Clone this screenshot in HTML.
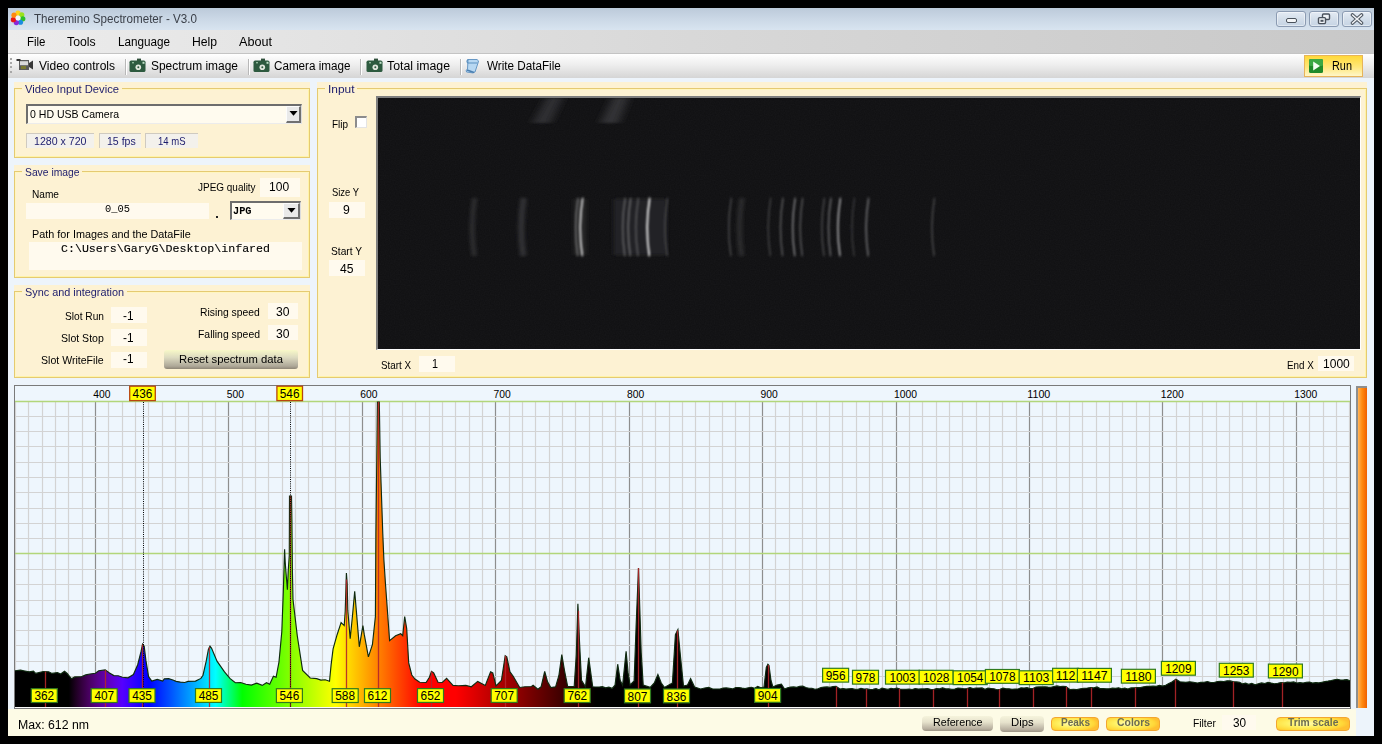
<!DOCTYPE html>
<html><head><meta charset="utf-8"><style>
html,body{margin:0;padding:0;}
body{width:1382px;height:744px;background:#000;position:relative;overflow:hidden;font-family:"Liberation Sans",sans-serif;}
.r{position:absolute;box-sizing:border-box;}
svg.r{box-sizing:content-box;}
.t{position:absolute;white-space:nowrap;transform-origin:0 0;}
svg text{font-family:"Liberation Sans",sans-serif;}
</style></head><body>
<div class="r" style="left:8px;top:8px;width:1366px;height:728px;background:#edf4fb;"></div>
<div class="r" style="left:8px;top:8px;width:1366px;height:22px;background:linear-gradient(#bccada,#cbd8e6 50%,#d8e4f0);"></div>
<svg class="r" style="left:9px;top:9px;" width="18" height="18" viewBox="0 0 18 18"><circle cx="9.00" cy="4.10" r="2.6" fill="#ffd21a"/><circle cx="12.75" cy="5.85" r="2.6" fill="#9ae21a"/><circle cx="13.83" cy="9.85" r="2.6" fill="#2dbf2a"/><circle cx="11.45" cy="13.24" r="2.6" fill="#1a8de0"/><circle cx="7.32" cy="13.60" r="2.6" fill="#8a2ad8"/><circle cx="4.40" cy="10.68" r="2.6" fill="#e8161a"/><circle cx="4.99" cy="6.19" r="2.6" fill="#ff8a10"/><circle cx="9" cy="9" r="2.5" fill="#f2f6fa"/></svg>
<div class="t" style="left:34.00px;top:12.70px;font-size:12px;line-height:12px;color:#3a3f48;transform:scaleX(0.9698);">Theremino Spectrometer - V3.0</div>
<div class="r" style="left:1275.5px;top:10.5px;width:30.0px;height:16px;border:1px solid #8b9bb2;border-radius:3px;background:linear-gradient(#e4ebf4,#d3deea 50%,#c6d4e4);box-shadow:inset 0 0 0 1px rgba(255,255,255,0.45);"></div>
<div class="r" style="left:1308.5px;top:10.5px;width:30.0px;height:16px;border:1px solid #8b9bb2;border-radius:3px;background:linear-gradient(#e4ebf4,#d3deea 50%,#c6d4e4);box-shadow:inset 0 0 0 1px rgba(255,255,255,0.45);"></div>
<div class="r" style="left:1341.5px;top:10.5px;width:30.0px;height:16px;border:1px solid #8b9bb2;border-radius:3px;background:linear-gradient(#e4ebf4,#d3deea 50%,#c6d4e4);box-shadow:inset 0 0 0 1px rgba(255,255,255,0.45);"></div>
<div class="r" style="left:1285.5px;top:18px;width:11px;height:5px;border:1px solid #4a525c;border-radius:2px;background:#f4f6f8;"></div>
<svg class="r" style="left:1317px;top:12.5px" width="14" height="12" viewBox="0 0 14 12"><rect x="5.5" y="1" width="7" height="5.5" rx="1" fill="#eef2f6" stroke="#4a525c" stroke-width="1.4"/><rect x="1.5" y="4.6" width="7" height="6" rx="1" fill="#eef2f6" stroke="#4a525c" stroke-width="1.4"/><rect x="3.5" y="6.8" width="3" height="2" fill="#4a525c"/></svg>
<svg class="r" style="left:1349.5px;top:12.5px" width="14" height="12" viewBox="0 0 14 12"><path d="M2.5 2 L11.5 10 M11.5 2 L2.5 10" stroke="#4a525c" stroke-width="3.6" stroke-linecap="round"/><path d="M2.5 2 L11.5 10 M11.5 2 L2.5 10" stroke="#f2f4f7" stroke-width="1.6" stroke-linecap="round"/></svg>
<div class="r" style="left:8px;top:30px;width:1366px;height:24px;background:linear-gradient(90deg,#ececec,#d8d8d8 50%,#c8c8c8);box-shadow:inset 0 -1px 0 #c4c4c4;"></div>
<div class="t" style="left:26.90px;top:35.80px;font-size:12px;line-height:12px;color:#000;transform:scaleX(0.9567);">File</div>
<div class="t" style="left:67.40px;top:35.80px;font-size:12px;line-height:12px;color:#000;transform:scaleX(1.0245);">Tools</div>
<div class="t" style="left:118.10px;top:35.80px;font-size:12px;line-height:12px;color:#000;transform:scaleX(0.9758);">Language</div>
<div class="t" style="left:191.90px;top:35.80px;font-size:12px;line-height:12px;color:#000;transform:scaleX(1.0170);">Help</div>
<div class="t" style="left:239.00px;top:35.80px;font-size:12px;line-height:12px;color:#000;transform:scaleX(1.0523);">About</div>
<div class="r" style="left:8px;top:54px;width:1366px;height:24px;background:linear-gradient(#ffffff,#eeeeee 45%,#d5d5d5);"></div>
<div class="r" style="left:10px;top:58px;width:2px;height:2px;background:#a8a8a8;"></div>
<div class="r" style="left:10px;top:62px;width:2px;height:2px;background:#a8a8a8;"></div>
<div class="r" style="left:10px;top:66px;width:2px;height:2px;background:#a8a8a8;"></div>
<div class="r" style="left:10px;top:71px;width:2px;height:2px;background:#a8a8a8;"></div>
<svg class="r" style="left:16px;top:58px" width="18" height="14" viewBox="0 0 18 14"><rect x="3" y="2" width="10" height="10" fill="#5a5a5a"/><rect x="4" y="3.2" width="8" height="4" fill="#d9d9d9"/><rect x="0.5" y="1" width="4" height="2" fill="#333"/><path d="M13 5 L17 2.5 L17 11.5 L13 9 Z" fill="#3a3a3a"/><rect x="5" y="8" width="5" height="3" fill="#7a7a30"/></svg>
<div class="t" style="left:39.30px;top:59.70px;font-size:12px;line-height:12px;color:#000;transform:scaleX(1.0023);">Video controls</div>
<div class="r" style="left:124.5px;top:59px;width:1.0px;height:16px;background:#b8b8b8;box-shadow:1px 0 0 #fff;"></div>
<svg class="r" style="left:129px;top:58px" width="17" height="15" viewBox="0 0 17 15"><rect x="8" y="0.6" width="4" height="3" fill="#2f4f3a"/><rect x="0.5" y="2.6" width="16" height="11.4" rx="1.6" fill="#2d5a3f"/><circle cx="9.3" cy="9.2" r="2.8" fill="#e0e6dd"/><circle cx="9.3" cy="9.2" r="1" fill="#2d5a3f"/><rect x="13.5" y="3.8" width="2" height="2" fill="#bfe0c8"/><rect x="3" y="4" width="2" height="1.4" fill="#8fb89a"/></svg>
<div class="t" style="left:151.20px;top:59.70px;font-size:12px;line-height:12px;color:#000;transform:scaleX(0.9957);">Spectrum image</div>
<div class="r" style="left:247.5px;top:59px;width:1.0px;height:16px;background:#b8b8b8;box-shadow:1px 0 0 #fff;"></div>
<svg class="r" style="left:252.5px;top:58px" width="17" height="15" viewBox="0 0 17 15"><rect x="8" y="0.6" width="4" height="3" fill="#2f4f3a"/><rect x="0.5" y="2.6" width="16" height="11.4" rx="1.6" fill="#2d5a3f"/><circle cx="9.3" cy="9.2" r="2.8" fill="#e0e6dd"/><circle cx="9.3" cy="9.2" r="1" fill="#2d5a3f"/><rect x="13.5" y="3.8" width="2" height="2" fill="#bfe0c8"/><rect x="3" y="4" width="2" height="1.4" fill="#8fb89a"/></svg>
<div class="t" style="left:274.40px;top:59.70px;font-size:12px;line-height:12px;color:#000;transform:scaleX(0.9708);">Camera image</div>
<div class="r" style="left:360.4px;top:59px;width:1.0px;height:16px;background:#b8b8b8;box-shadow:1px 0 0 #fff;"></div>
<svg class="r" style="left:365.5px;top:58px" width="17" height="15" viewBox="0 0 17 15"><rect x="8" y="0.6" width="4" height="3" fill="#2f4f3a"/><rect x="0.5" y="2.6" width="16" height="11.4" rx="1.6" fill="#2d5a3f"/><circle cx="9.3" cy="9.2" r="2.8" fill="#e0e6dd"/><circle cx="9.3" cy="9.2" r="1" fill="#2d5a3f"/><rect x="13.5" y="3.8" width="2" height="2" fill="#bfe0c8"/><rect x="3" y="4" width="2" height="1.4" fill="#8fb89a"/></svg>
<div class="t" style="left:387.30px;top:59.70px;font-size:12px;line-height:12px;color:#000;transform:scaleX(1.0266);">Total image</div>
<div class="r" style="left:459.8px;top:59px;width:1.0px;height:16px;background:#b8b8b8;box-shadow:1px 0 0 #fff;"></div>
<svg class="r" style="left:465px;top:58px" width="15" height="16" viewBox="0 0 15 16"><path d="M3 1.5 L12 1.5 Q14.5 2.5 13 5 L10 14 Q8 15.5 5 14.5 L1.5 14 Q0.5 12 2.5 11 Z" fill="#b8d8f2" stroke="#5a8fc0" stroke-width="0.9"/><path d="M3 1.5 Q1 3.5 3 5 L12.5 5" fill="none" stroke="#5a8fc0" stroke-width="1.2"/><path d="M2 12 L9 14.5" stroke="#4a7fb0" stroke-width="1.5"/></svg>
<div class="t" style="left:486.50px;top:59.70px;font-size:12px;line-height:12px;color:#000;transform:scaleX(0.9736);">Write DataFile</div>
<div class="r" style="left:1304px;top:55px;width:59px;height:22px;box-sizing:border-box;border:1px solid #e7b45a;background:linear-gradient(#ffd93a,#ffe77a 55%,#fff6c8);"></div>
<svg class="r" style="left:1309px;top:59px" width="14" height="14" viewBox="0 0 14 14"><rect x="0" y="0" width="14" height="14" rx="1.5" fill="#1f8a2a"/><rect x="0" y="0" width="14" height="7" rx="1.5" fill="#3aa844"/><path d="M4.2 2.5 L11 7 L4.2 11.5 Z" fill="#f4fff4"/></svg>
<div class="t" style="left:1331.60px;top:59.70px;font-size:12px;line-height:12px;color:#000;transform:scaleX(0.9085);">Run</div>
<div class="r" style="left:14px;top:82px;width:296px;height:76px;background:#fdf2d3;"></div>
<div class="r" style="left:14px;top:88px;width:296px;height:70px;border:1px solid #e5ca72;box-shadow:inset 1px 1px 0 #fff6c0, inset -1px -1px 0 #fff3a8;"></div>
<div class="r" style="left:21.8px;top:87px;width:100.0px;height:4px;background:#fdf2d3;"></div>
<div class="t" style="left:24.80px;top:84.15px;font-size:11px;line-height:11px;color:#1c1c6c;transform:scaleX(1.0202);">Video Input Device</div>
<div class="r" style="left:26px;top:103.5px;width:276px;height:20.5px;border-top:2px solid #6d6d6d;border-left:2px solid #6d6d6d;border-right:1px solid #dcdcdc;border-bottom:1px solid #ececec;background:#fffbef;"></div>
<div class="r" style="left:285.5px;top:105.5px;width:15.5px;height:17.5px;border-right:2px solid #707070;border-bottom:2px solid #707070;border-top:1px solid #fcfcfc;border-left:1px solid #fcfcfc;background:#e9e9e9;"></div>
<svg class="r" style="left:288.8px;top:111.2px" width="9" height="5" viewBox="0 0 9 5"><path d="M0.5 0 L8.5 0 L4.5 4.8 Z" fill="#000"/></svg>
<div class="t" style="left:29.60px;top:108.95px;font-size:11px;line-height:11px;color:#000;transform:scaleX(0.9578);">0 HD USB Camera</div>
<div class="r" style="left:26px;top:133px;width:68px;height:14.5px;border-top:1px solid #cfcac0;border-left:1px solid #cfcac0;background:#f3f1ec;"></div>
<div class="r" style="left:99px;top:133px;width:42px;height:14.5px;border-top:1px solid #cfcac0;border-left:1px solid #cfcac0;background:#f3f1ec;"></div>
<div class="r" style="left:145px;top:133px;width:53px;height:14.5px;border-top:1px solid #cfcac0;border-left:1px solid #cfcac0;background:#f3f1ec;"></div>
<div class="t" style="left:33.50px;top:136.45px;font-size:11px;line-height:11px;color:#1c1c6c;transform:scaleX(0.9644);">1280 x 720</div>
<div class="t" style="left:106.50px;top:136.45px;font-size:11px;line-height:11px;color:#1c1c6c;transform:scaleX(0.9578);">15 fps</div>
<div class="t" style="left:157.70px;top:136.45px;font-size:11px;line-height:11px;color:#1c1c6c;transform:scaleX(0.8650);">14 mS</div>
<div class="r" style="left:14px;top:165px;width:296px;height:113px;background:#fdf2d3;"></div>
<div class="r" style="left:14px;top:171px;width:296px;height:107px;border:1px solid #e5ca72;box-shadow:inset 1px 1px 0 #fff6c0, inset -1px -1px 0 #fff3a8;"></div>
<div class="r" style="left:21.5px;top:170px;width:60.5px;height:4px;background:#fdf2d3;"></div>
<div class="t" style="left:24.50px;top:167.15px;font-size:11px;line-height:11px;color:#1c1c6c;transform:scaleX(0.9382);">Save image</div>
<div class="t" style="left:32.30px;top:188.95px;font-size:11px;line-height:11px;color:#000;transform:scaleX(0.9201);">Name</div>
<div class="t" style="left:198.00px;top:182.45px;font-size:11px;line-height:11px;color:#000;transform:scaleX(0.9059);">JPEG quality</div>
<div class="r" style="left:259.5px;top:178px;width:40.5px;height:18.5px;background:#fffaee;"></div>
<div class="t" style="left:269.40px;top:180.80px;font-size:12px;line-height:12px;color:#000;transform:scaleX(1.0039);">100</div>
<div class="r" style="left:26px;top:203px;width:183px;height:15.5px;background:#fffaee;"></div>
<div class="t" style="left:104.80px;top:204.47px;font-size:11px;line-height:11px;color:#000;font-family:'Liberation Mono',monospace;transform:scaleX(0.9468);">0_05</div>
<div class="r" style="left:216px;top:216px;width:2px;height:2px;background:#222;"></div>
<div class="r" style="left:229.5px;top:200.5px;width:71.0px;height:19.19999999999999px;border-top:2px solid #6d6d6d;border-left:2px solid #6d6d6d;border-right:1px solid #dcdcdc;border-bottom:1px solid #ececec;background:#fffbef;"></div>
<div class="r" style="left:283px;top:202.5px;width:16.5px;height:16.19999999999999px;border-right:2px solid #707070;border-bottom:2px solid #707070;border-top:1px solid #fcfcfc;border-left:1px solid #fcfcfc;background:#e9e9e9;"></div>
<svg class="r" style="left:286.8px;top:207.6px" width="9" height="5" viewBox="0 0 9 5"><path d="M0.5 0 L8.5 0 L4.5 4.8 Z" fill="#000"/></svg>
<div class="t" style="left:232.60px;top:205.67px;font-size:11px;line-height:11px;color:#000;font-family:'Liberation Mono',monospace;font-weight:bold;transform:scaleX(0.9342);">JPG</div>
<div class="t" style="left:32.30px;top:229.25px;font-size:11px;line-height:11px;color:#000;transform:scaleX(0.9837);">Path for Images and the DataFile</div>
<div class="r" style="left:29px;top:242px;width:273px;height:27.5px;background:#fffaee;"></div>
<div class="t" style="left:61.30px;top:244.07px;font-size:11px;line-height:11px;color:#000;font-family:'Liberation Mono',monospace;transform:scaleX(1.0554);-webkit-text-stroke:0.12px #000;">C:\Users\GaryG\Desktop\infared</div>
<div class="r" style="left:14px;top:285px;width:296px;height:93px;background:#fdf2d3;"></div>
<div class="r" style="left:14px;top:291px;width:296px;height:87px;border:1px solid #e5ca72;box-shadow:inset 1px 1px 0 #fff6c0, inset -1px -1px 0 #fff3a8;"></div>
<div class="r" style="left:21.5px;top:290px;width:105.0px;height:4px;background:#fdf2d3;"></div>
<div class="t" style="left:24.50px;top:287.25px;font-size:11px;line-height:11px;color:#1c1c6c;transform:scaleX(0.9871);">Sync and integration</div>
<div class="t" style="left:0.00px;top:311.45px;font-size:11px;line-height:11px;color:#000;transform:scaleX(0.9244);left:65px;">Slot Run</div>
<div class="t" style="left:61.40px;top:333.25px;font-size:11px;line-height:11px;color:#000;transform:scaleX(0.9588);">Slot Stop</div>
<div class="t" style="left:40.60px;top:354.95px;font-size:11px;line-height:11px;color:#000;transform:scaleX(0.9601);">Slot WriteFile</div>
<div class="r" style="left:111px;top:307px;width:36px;height:16.19999999999999px;background:#fffaee;"></div>
<div class="t" style="left:123.40px;top:309.80px;font-size:12px;line-height:12px;color:#000;transform:scaleX(0.9840);">-1</div>
<div class="r" style="left:111px;top:329px;width:36px;height:16.5px;background:#fffaee;"></div>
<div class="t" style="left:123.40px;top:331.60px;font-size:12px;line-height:12px;color:#000;transform:scaleX(0.9840);">-1</div>
<div class="r" style="left:111px;top:351.5px;width:36px;height:16.100000000000023px;background:#fffaee;"></div>
<div class="t" style="left:123.40px;top:353.30px;font-size:12px;line-height:12px;color:#000;transform:scaleX(0.9840);">-1</div>
<div class="t" style="left:200.40px;top:307.35px;font-size:11px;line-height:11px;color:#000;transform:scaleX(0.9403);">Rising speed</div>
<div class="t" style="left:198.20px;top:329.15px;font-size:11px;line-height:11px;color:#000;transform:scaleX(0.9475);">Falling speed</div>
<div class="r" style="left:268px;top:303px;width:30px;height:15.600000000000023px;background:#fffaee;"></div>
<div class="t" style="left:276.00px;top:305.70px;font-size:12px;line-height:12px;color:#000;transform:scaleX(1.0114);">30</div>
<div class="r" style="left:268px;top:325px;width:30px;height:15.399999999999977px;background:#fffaee;"></div>
<div class="t" style="left:276.00px;top:327.50px;font-size:12px;line-height:12px;color:#000;transform:scaleX(1.0114);">30</div>
<div class="r" style="left:163.5px;top:349.5px;width:134.5px;height:19.5px;border-radius:3px;background:linear-gradient(#f8f8c8,#dcdac0 40%,#aea898 85%,#8e8676);"></div>
<div class="t" style="left:178.50px;top:354.45px;font-size:11px;line-height:11px;color:#000;transform:scaleX(1.0237);">Reset spectrum data</div>
<div class="r" style="left:317px;top:82px;width:1050px;height:296px;background:#fdf2d3;"></div>
<div class="r" style="left:317px;top:88px;width:1050px;height:290px;border:1px solid #e5ca72;box-shadow:inset 1px 1px 0 #fff6c0, inset -1px -1px 0 #fff3a8;"></div>
<div class="r" style="left:324.6px;top:87px;width:32.5px;height:4px;background:#fdf2d3;"></div>
<div class="t" style="left:327.60px;top:84.35px;font-size:11px;line-height:11px;color:#1c1c6c;transform:scaleX(1.0832);">Input</div>
<div class="t" style="left:331.50px;top:119.05px;font-size:11px;line-height:11px;color:#000;transform:scaleX(0.9027);">Flip</div>
<div class="r" style="left:355px;top:116px;width:12px;height:12px;border-top:2px solid #8c8c8c;border-left:2px solid #8c8c8c;border-right:1px solid #e4e4e4;border-bottom:1px solid #e4e4e4;background:#fff;"></div>
<div class="t" style="left:331.50px;top:187.25px;font-size:11px;line-height:11px;color:#000;transform:scaleX(0.8546);">Size Y</div>
<div class="r" style="left:329px;top:202px;width:36px;height:16px;background:#fffaee;"></div>
<div class="t" style="left:342.50px;top:204.30px;font-size:12px;line-height:12px;color:#000;transform:scaleX(1.0189);">9</div>
<div class="t" style="left:330.60px;top:246.45px;font-size:11px;line-height:11px;color:#000;transform:scaleX(0.9274);">Start Y</div>
<div class="r" style="left:329px;top:260.3px;width:36px;height:15.699999999999989px;background:#fffaee;"></div>
<div class="t" style="left:339.50px;top:262.80px;font-size:12px;line-height:12px;color:#000;transform:scaleX(1.0114);">45</div>
<div class="t" style="left:380.80px;top:360.05px;font-size:11px;line-height:11px;color:#000;transform:scaleX(0.8922);">Start X</div>
<div class="r" style="left:419px;top:356px;width:36px;height:15.699999999999989px;background:#fffaee;"></div>
<div class="t" style="left:432.00px;top:358.40px;font-size:12px;line-height:12px;color:#000;transform:scaleX(0.8990);">1</div>
<div class="t" style="left:1286.50px;top:360.05px;font-size:11px;line-height:11px;color:#000;transform:scaleX(0.8943);">End X</div>
<div class="r" style="left:1318px;top:356.4px;width:36px;height:15.0px;background:#fffaee;"></div>
<div class="t" style="left:1322.70px;top:358.40px;font-size:12px;line-height:12px;color:#000;transform:scaleX(1.0039);">1000</div>
<div class="r" style="left:375.5px;top:96px;width:982.5px;height:251px;border-top:2px solid #7f7f7f;border-left:2px solid #7f7f7f;border-right:1px solid #fff;border-bottom:1px solid #fff;box-sizing:content-box;background:#0f0f11;"></div>
<svg class="r" style="left:377.5px;top:98px" width="982" height="251" viewBox="0 0 982 251"><defs><filter id="bl1" filterUnits="userSpaceOnUse" x="0" y="0" width="985" height="251"><feGaussianBlur stdDeviation="0.9 1.5"/></filter><filter id="bl2" filterUnits="userSpaceOnUse" x="0" y="0" width="985" height="251"><feGaussianBlur stdDeviation="2 1.5"/></filter><filter id="bl3" x="-50%" y="-20%" width="200%" height="140%"><feGaussianBlur stdDeviation="4 2"/></filter><filter id="noise"><feTurbulence type="fractalNoise" baseFrequency="0.8" numOctaves="1" seed="3"/><feColorMatrix values="0 0 0 0 0.2  0 0 0 0 0.2  0 0 0 0 0.21  0 0 0 0.25 0"/></filter></defs><rect width="982" height="251" fill="#0f0f11"/><rect width="982" height="251" filter="url(#noise)" opacity="0.35"/><filter id="blh" filterUnits="userSpaceOnUse" x="0" y="0" width="985" height="251"><feGaussianBlur stdDeviation="4.5 1.2"/></filter><path d="M154.5 25 L168.5 0 L184.5 0 L172.5 25 Z" fill="#2f2f31" filter="url(#blh)"/><path d="M222.5 25 L234.5 0 L250.5 0 L240.5 25 Z" fill="#333335" filter="url(#blh)"/><rect x="235.5" y="101" width="53" height="56" fill="#232325" filter="url(#bl2)"/><rect x="196.5" y="101" width="11" height="56" fill="#2a2a2c" filter="url(#bl2)"/><path d="M96.7 100 Q91.9 129.0 96.3 158" stroke="rgb(61,61,63)" stroke-width="3" fill="none" filter="url(#bl2)"/><path d="M145.7 100 Q140.9 129.0 145.3 158" stroke="rgb(57,57,59)" stroke-width="5" fill="none" filter="url(#bl2)"/><path d="M204.7 100 Q199.9 129.0 204.3 158" stroke="rgb(244,244,246)" stroke-width="1.5" fill="none" filter="url(#bl1)"/><path d="M200.2 100 Q195.4 129.0 199.8 158" stroke="rgb(115,115,117)" stroke-width="1.4" fill="none" filter="url(#bl1)"/><path d="M247.2 100 Q242.4 129.0 246.8 158" stroke="rgb(104,104,106)" stroke-width="1.4" fill="none" filter="url(#bl1)"/><path d="M252.7 100 Q247.9 129.0 252.3 158" stroke="rgb(115,115,117)" stroke-width="1.4" fill="none" filter="url(#bl1)"/><path d="M260.4 100 Q255.6 129.0 260.0 158" stroke="rgb(93,93,95)" stroke-width="1.4" fill="none" filter="url(#bl1)"/><path d="M271.7 100 Q266.9 129.0 271.3 158" stroke="rgb(255,255,257)" stroke-width="1.7" fill="none" filter="url(#bl1)"/><path d="M289.5 100 Q284.7 129.0 289.1 158" stroke="rgb(78,78,80)" stroke-width="1.4" fill="none" filter="url(#bl1)"/><path d="M353.3 100 Q348.5 129.0 352.9 158" stroke="rgb(72,72,74)" stroke-width="1.5" fill="none" filter="url(#bl1)"/><path d="M364.0 100 Q359.2 129.0 363.6 158" stroke="rgb(55,55,57)" stroke-width="3.5" fill="none" filter="url(#bl2)"/><path d="M392.7 100 Q387.9 129.0 392.3 158" stroke="rgb(65,65,67)" stroke-width="1.5" fill="none" filter="url(#bl1)"/><path d="M405.0 100 Q400.2 129.0 404.6 158" stroke="rgb(87,87,89)" stroke-width="1.6" fill="none" filter="url(#bl1)"/><path d="M417.2 100 Q412.4 129.0 416.8 158" stroke="rgb(147,147,149)" stroke-width="1.3" fill="none" filter="url(#bl1)"/><path d="M424.7 100 Q419.9 129.0 424.3 158" stroke="rgb(87,87,89)" stroke-width="1.5" fill="none" filter="url(#bl1)"/><path d="M446.4 100 Q441.6 129.0 446.0 158" stroke="rgb(72,72,74)" stroke-width="1.5" fill="none" filter="url(#bl1)"/><path d="M453.0 100 Q448.2 129.0 452.6 158" stroke="rgb(100,100,102)" stroke-width="1.6" fill="none" filter="url(#bl1)"/><path d="M462.4 100 Q457.6 129.0 462.0 158" stroke="rgb(179,179,181)" stroke-width="1.5" fill="none" filter="url(#bl1)"/><path d="M476.5 100 Q471.7 129.0 476.1 158" stroke="rgb(57,57,59)" stroke-width="1.5" fill="none" filter="url(#bl1)"/><path d="M490.6 100 Q485.8 129.0 490.2 158" stroke="rgb(104,104,106)" stroke-width="1.7" fill="none" filter="url(#bl1)"/><path d="M556.5 100 Q551.7 129.0 556.1 158" stroke="rgb(72,72,74)" stroke-width="1.5" fill="none" filter="url(#bl1)"/></svg>
<div class="r" style="left:14px;top:385px;width:1337px;height:324px;border:1px solid #7a7a7a;background:#eef6fd;"></div>
<div class="r" style="left:15px;top:707px;width:1335px;height:1px;background:#fafafa;"></div>
<svg class="r" style="left:0;top:0" width="1382" height="744" viewBox="0 0 1382 744"><defs><linearGradient id="spec" gradientUnits="userSpaceOnUse" x1="15" y1="0" x2="1350" y2="0"><stop offset="0.0003" stop-color="rgb(0,0,0)"/><stop offset="0.0053" stop-color="rgb(0,0,0)"/><stop offset="0.0103" stop-color="rgb(0,0,0)"/><stop offset="0.0153" stop-color="rgb(0,0,0)"/><stop offset="0.0203" stop-color="rgb(0,0,0)"/><stop offset="0.0253" stop-color="rgb(0,0,0)"/><stop offset="0.0303" stop-color="rgb(0,0,0)"/><stop offset="0.0353" stop-color="rgb(0,0,0)"/><stop offset="0.0403" stop-color="rgb(0,0,0)"/><stop offset="0.0453" stop-color="rgb(29,0,32)"/><stop offset="0.0503" stop-color="rgb(53,0,64)"/><stop offset="0.0553" stop-color="rgb(72,0,96)"/><stop offset="0.0603" stop-color="rgb(85,0,128)"/><stop offset="0.0653" stop-color="rgb(93,0,159)"/><stop offset="0.0703" stop-color="rgb(96,0,191)"/><stop offset="0.0753" stop-color="rgb(93,0,223)"/><stop offset="0.0803" stop-color="rgb(85,0,255)"/><stop offset="0.0853" stop-color="rgb(64,0,255)"/><stop offset="0.0903" stop-color="rgb(42,0,255)"/><stop offset="0.0953" stop-color="rgb(21,0,255)"/><stop offset="0.1003" stop-color="rgb(0,0,255)"/><stop offset="0.1053" stop-color="rgb(0,26,255)"/><stop offset="0.1103" stop-color="rgb(0,51,255)"/><stop offset="0.1153" stop-color="rgb(0,76,255)"/><stop offset="0.1203" stop-color="rgb(0,102,255)"/><stop offset="0.1253" stop-color="rgb(0,128,255)"/><stop offset="0.1303" stop-color="rgb(0,153,255)"/><stop offset="0.1353" stop-color="rgb(0,178,255)"/><stop offset="0.1403" stop-color="rgb(0,204,255)"/><stop offset="0.1453" stop-color="rgb(0,230,255)"/><stop offset="0.1503" stop-color="rgb(0,255,255)"/><stop offset="0.1552" stop-color="rgb(0,255,191)"/><stop offset="0.1602" stop-color="rgb(0,255,128)"/><stop offset="0.1652" stop-color="rgb(0,255,64)"/><stop offset="0.1702" stop-color="rgb(0,255,0)"/><stop offset="0.1752" stop-color="rgb(18,255,0)"/><stop offset="0.1802" stop-color="rgb(36,255,0)"/><stop offset="0.1852" stop-color="rgb(55,255,0)"/><stop offset="0.1902" stop-color="rgb(73,255,0)"/><stop offset="0.1952" stop-color="rgb(91,255,0)"/><stop offset="0.2002" stop-color="rgb(109,255,0)"/><stop offset="0.2052" stop-color="rgb(128,255,0)"/><stop offset="0.2102" stop-color="rgb(146,255,0)"/><stop offset="0.2152" stop-color="rgb(164,255,0)"/><stop offset="0.2202" stop-color="rgb(182,255,0)"/><stop offset="0.2252" stop-color="rgb(200,255,0)"/><stop offset="0.2302" stop-color="rgb(219,255,0)"/><stop offset="0.2352" stop-color="rgb(237,255,0)"/><stop offset="0.2402" stop-color="rgb(255,255,0)"/><stop offset="0.2452" stop-color="rgb(255,235,0)"/><stop offset="0.2502" stop-color="rgb(255,216,0)"/><stop offset="0.2552" stop-color="rgb(255,196,0)"/><stop offset="0.2602" stop-color="rgb(255,177,0)"/><stop offset="0.2652" stop-color="rgb(255,157,0)"/><stop offset="0.2702" stop-color="rgb(255,137,0)"/><stop offset="0.2752" stop-color="rgb(255,118,0)"/><stop offset="0.2802" stop-color="rgb(255,98,0)"/><stop offset="0.2852" stop-color="rgb(255,78,0)"/><stop offset="0.2902" stop-color="rgb(255,59,0)"/><stop offset="0.2952" stop-color="rgb(255,39,0)"/><stop offset="0.3002" stop-color="rgb(255,20,0)"/><stop offset="0.3052" stop-color="rgb(255,0,0)"/><stop offset="0.3102" stop-color="rgb(255,0,0)"/><stop offset="0.3152" stop-color="rgb(255,0,0)"/><stop offset="0.3202" stop-color="rgb(255,0,0)"/><stop offset="0.3252" stop-color="rgb(255,0,0)"/><stop offset="0.3302" stop-color="rgb(255,0,0)"/><stop offset="0.3352" stop-color="rgb(243,0,0)"/><stop offset="0.3402" stop-color="rgb(231,0,0)"/><stop offset="0.3452" stop-color="rgb(219,0,0)"/><stop offset="0.3501" stop-color="rgb(206,0,0)"/><stop offset="0.3551" stop-color="rgb(194,0,0)"/><stop offset="0.3601" stop-color="rgb(182,0,0)"/><stop offset="0.3651" stop-color="rgb(170,0,0)"/><stop offset="0.3701" stop-color="rgb(158,0,0)"/><stop offset="0.3751" stop-color="rgb(146,0,0)"/><stop offset="0.3801" stop-color="rgb(134,0,0)"/><stop offset="0.3851" stop-color="rgb(121,0,0)"/><stop offset="0.3901" stop-color="rgb(109,0,0)"/><stop offset="0.3951" stop-color="rgb(97,0,0)"/><stop offset="0.4001" stop-color="rgb(85,0,0)"/><stop offset="0.4051" stop-color="rgb(73,0,0)"/><stop offset="0.4101" stop-color="rgb(61,0,0)"/><stop offset="0.4151" stop-color="rgb(49,0,0)"/><stop offset="0.4201" stop-color="rgb(36,0,0)"/><stop offset="0.4251" stop-color="rgb(24,0,0)"/><stop offset="0.4301" stop-color="rgb(12,0,0)"/><stop offset="0.4351" stop-color="rgb(0,0,0)"/><stop offset="0.4401" stop-color="rgb(0,0,0)"/><stop offset="0.4451" stop-color="rgb(0,0,0)"/><stop offset="0.4501" stop-color="rgb(0,0,0)"/><stop offset="0.4551" stop-color="rgb(0,0,0)"/><stop offset="0.4601" stop-color="rgb(0,0,0)"/><stop offset="0.4651" stop-color="rgb(0,0,0)"/><stop offset="0.4701" stop-color="rgb(0,0,0)"/><stop offset="0.4751" stop-color="rgb(0,0,0)"/><stop offset="0.4801" stop-color="rgb(0,0,0)"/><stop offset="0.4851" stop-color="rgb(0,0,0)"/><stop offset="0.4901" stop-color="rgb(0,0,0)"/><stop offset="0.4951" stop-color="rgb(0,0,0)"/><stop offset="0.5001" stop-color="rgb(0,0,0)"/><stop offset="0.5051" stop-color="rgb(0,0,0)"/><stop offset="0.5101" stop-color="rgb(0,0,0)"/><stop offset="0.5151" stop-color="rgb(0,0,0)"/><stop offset="0.5201" stop-color="rgb(0,0,0)"/><stop offset="0.5251" stop-color="rgb(0,0,0)"/><stop offset="0.5301" stop-color="rgb(0,0,0)"/><stop offset="0.5351" stop-color="rgb(0,0,0)"/><stop offset="0.5400" stop-color="rgb(0,0,0)"/><stop offset="0.5450" stop-color="rgb(0,0,0)"/><stop offset="0.5500" stop-color="rgb(0,0,0)"/><stop offset="0.5550" stop-color="rgb(0,0,0)"/><stop offset="0.5600" stop-color="rgb(0,0,0)"/><stop offset="0.5650" stop-color="rgb(0,0,0)"/><stop offset="0.5700" stop-color="rgb(0,0,0)"/><stop offset="0.5750" stop-color="rgb(0,0,0)"/><stop offset="0.5800" stop-color="rgb(0,0,0)"/><stop offset="0.5850" stop-color="rgb(0,0,0)"/><stop offset="0.5900" stop-color="rgb(0,0,0)"/><stop offset="0.5950" stop-color="rgb(0,0,0)"/><stop offset="0.6000" stop-color="rgb(0,0,0)"/><stop offset="0.6050" stop-color="rgb(0,0,0)"/><stop offset="0.6100" stop-color="rgb(0,0,0)"/><stop offset="0.6150" stop-color="rgb(0,0,0)"/><stop offset="0.6200" stop-color="rgb(0,0,0)"/><stop offset="0.6250" stop-color="rgb(0,0,0)"/><stop offset="0.6300" stop-color="rgb(0,0,0)"/><stop offset="0.6350" stop-color="rgb(0,0,0)"/><stop offset="0.6400" stop-color="rgb(0,0,0)"/><stop offset="0.6450" stop-color="rgb(0,0,0)"/><stop offset="0.6500" stop-color="rgb(0,0,0)"/><stop offset="0.6550" stop-color="rgb(0,0,0)"/><stop offset="0.6600" stop-color="rgb(0,0,0)"/><stop offset="0.6650" stop-color="rgb(0,0,0)"/><stop offset="0.6700" stop-color="rgb(0,0,0)"/><stop offset="0.6750" stop-color="rgb(0,0,0)"/><stop offset="0.6800" stop-color="rgb(0,0,0)"/><stop offset="0.6850" stop-color="rgb(0,0,0)"/><stop offset="0.6900" stop-color="rgb(0,0,0)"/><stop offset="0.6950" stop-color="rgb(0,0,0)"/><stop offset="0.7000" stop-color="rgb(0,0,0)"/><stop offset="0.7050" stop-color="rgb(0,0,0)"/><stop offset="0.7100" stop-color="rgb(0,0,0)"/><stop offset="0.7150" stop-color="rgb(0,0,0)"/><stop offset="0.7200" stop-color="rgb(0,0,0)"/><stop offset="0.7250" stop-color="rgb(0,0,0)"/><stop offset="0.7299" stop-color="rgb(0,0,0)"/><stop offset="0.7349" stop-color="rgb(0,0,0)"/><stop offset="0.7399" stop-color="rgb(0,0,0)"/><stop offset="0.7449" stop-color="rgb(0,0,0)"/><stop offset="0.7499" stop-color="rgb(0,0,0)"/><stop offset="0.7549" stop-color="rgb(0,0,0)"/><stop offset="0.7599" stop-color="rgb(0,0,0)"/><stop offset="0.7649" stop-color="rgb(0,0,0)"/><stop offset="0.7699" stop-color="rgb(0,0,0)"/><stop offset="0.7749" stop-color="rgb(0,0,0)"/><stop offset="0.7799" stop-color="rgb(0,0,0)"/><stop offset="0.7849" stop-color="rgb(0,0,0)"/><stop offset="0.7899" stop-color="rgb(0,0,0)"/><stop offset="0.7949" stop-color="rgb(0,0,0)"/><stop offset="0.7999" stop-color="rgb(0,0,0)"/><stop offset="0.8049" stop-color="rgb(0,0,0)"/><stop offset="0.8099" stop-color="rgb(0,0,0)"/><stop offset="0.8149" stop-color="rgb(0,0,0)"/><stop offset="0.8199" stop-color="rgb(0,0,0)"/><stop offset="0.8249" stop-color="rgb(0,0,0)"/><stop offset="0.8299" stop-color="rgb(0,0,0)"/><stop offset="0.8349" stop-color="rgb(0,0,0)"/><stop offset="0.8399" stop-color="rgb(0,0,0)"/><stop offset="0.8449" stop-color="rgb(0,0,0)"/><stop offset="0.8499" stop-color="rgb(0,0,0)"/><stop offset="0.8549" stop-color="rgb(0,0,0)"/><stop offset="0.8599" stop-color="rgb(0,0,0)"/><stop offset="0.8649" stop-color="rgb(0,0,0)"/><stop offset="0.8699" stop-color="rgb(0,0,0)"/><stop offset="0.8749" stop-color="rgb(0,0,0)"/><stop offset="0.8799" stop-color="rgb(0,0,0)"/><stop offset="0.8849" stop-color="rgb(0,0,0)"/><stop offset="0.8899" stop-color="rgb(0,0,0)"/><stop offset="0.8949" stop-color="rgb(0,0,0)"/><stop offset="0.8999" stop-color="rgb(0,0,0)"/><stop offset="0.9049" stop-color="rgb(0,0,0)"/><stop offset="0.9099" stop-color="rgb(0,0,0)"/><stop offset="0.9149" stop-color="rgb(0,0,0)"/><stop offset="0.9198" stop-color="rgb(0,0,0)"/><stop offset="0.9248" stop-color="rgb(0,0,0)"/><stop offset="0.9298" stop-color="rgb(0,0,0)"/><stop offset="0.9348" stop-color="rgb(0,0,0)"/><stop offset="0.9398" stop-color="rgb(0,0,0)"/><stop offset="0.9448" stop-color="rgb(0,0,0)"/><stop offset="0.9498" stop-color="rgb(0,0,0)"/><stop offset="0.9548" stop-color="rgb(0,0,0)"/><stop offset="0.9598" stop-color="rgb(0,0,0)"/><stop offset="0.9648" stop-color="rgb(0,0,0)"/><stop offset="0.9698" stop-color="rgb(0,0,0)"/><stop offset="0.9748" stop-color="rgb(0,0,0)"/><stop offset="0.9798" stop-color="rgb(0,0,0)"/><stop offset="0.9848" stop-color="rgb(0,0,0)"/><stop offset="0.9898" stop-color="rgb(0,0,0)"/><stop offset="0.9948" stop-color="rgb(0,0,0)"/><stop offset="0.9998" stop-color="rgb(0,0,0)"/></linearGradient><clipPath id="cc"><rect x="15" y="386" width="1335" height="321"/></clipPath></defs><g clip-path="url(#cc)"><line x1="15.5" y1="401" x2="15.5" y2="707" stroke="#d3d3d3" stroke-width="1.2"/><line x1="28.5" y1="401" x2="28.5" y2="707" stroke="#d3d3d3" stroke-width="1.2"/><line x1="42.5" y1="401" x2="42.5" y2="707" stroke="#d3d3d3" stroke-width="1.2"/><line x1="55.5" y1="401" x2="55.5" y2="707" stroke="#d3d3d3" stroke-width="1.2"/><line x1="68.5" y1="401" x2="68.5" y2="707" stroke="#d3d3d3" stroke-width="1.2"/><line x1="82.5" y1="401" x2="82.5" y2="707" stroke="#d3d3d3" stroke-width="1.2"/><line x1="95.5" y1="401" x2="95.5" y2="707" stroke="#8e8e8e" stroke-width="1.2"/><line x1="108.5" y1="401" x2="108.5" y2="707" stroke="#d3d3d3" stroke-width="1.2"/><line x1="122.5" y1="401" x2="122.5" y2="707" stroke="#d3d3d3" stroke-width="1.2"/><line x1="135.5" y1="401" x2="135.5" y2="707" stroke="#d3d3d3" stroke-width="1.2"/><line x1="148.5" y1="401" x2="148.5" y2="707" stroke="#d3d3d3" stroke-width="1.2"/><line x1="162.5" y1="401" x2="162.5" y2="707" stroke="#d3d3d3" stroke-width="1.2"/><line x1="175.5" y1="401" x2="175.5" y2="707" stroke="#d3d3d3" stroke-width="1.2"/><line x1="188.5" y1="401" x2="188.5" y2="707" stroke="#d3d3d3" stroke-width="1.2"/><line x1="202.5" y1="401" x2="202.5" y2="707" stroke="#d3d3d3" stroke-width="1.2"/><line x1="215.5" y1="401" x2="215.5" y2="707" stroke="#d3d3d3" stroke-width="1.2"/><line x1="228.5" y1="401" x2="228.5" y2="707" stroke="#8e8e8e" stroke-width="1.2"/><line x1="242.5" y1="401" x2="242.5" y2="707" stroke="#d3d3d3" stroke-width="1.2"/><line x1="255.5" y1="401" x2="255.5" y2="707" stroke="#d3d3d3" stroke-width="1.2"/><line x1="268.5" y1="401" x2="268.5" y2="707" stroke="#d3d3d3" stroke-width="1.2"/><line x1="282.5" y1="401" x2="282.5" y2="707" stroke="#d3d3d3" stroke-width="1.2"/><line x1="295.5" y1="401" x2="295.5" y2="707" stroke="#d3d3d3" stroke-width="1.2"/><line x1="308.5" y1="401" x2="308.5" y2="707" stroke="#d3d3d3" stroke-width="1.2"/><line x1="322.5" y1="401" x2="322.5" y2="707" stroke="#d3d3d3" stroke-width="1.2"/><line x1="335.5" y1="401" x2="335.5" y2="707" stroke="#d3d3d3" stroke-width="1.2"/><line x1="349.5" y1="401" x2="349.5" y2="707" stroke="#d3d3d3" stroke-width="1.2"/><line x1="362.5" y1="401" x2="362.5" y2="707" stroke="#8e8e8e" stroke-width="1.2"/><line x1="375.5" y1="401" x2="375.5" y2="707" stroke="#d3d3d3" stroke-width="1.2"/><line x1="389.5" y1="401" x2="389.5" y2="707" stroke="#d3d3d3" stroke-width="1.2"/><line x1="402.5" y1="401" x2="402.5" y2="707" stroke="#d3d3d3" stroke-width="1.2"/><line x1="415.5" y1="401" x2="415.5" y2="707" stroke="#d3d3d3" stroke-width="1.2"/><line x1="429.5" y1="401" x2="429.5" y2="707" stroke="#d3d3d3" stroke-width="1.2"/><line x1="442.5" y1="401" x2="442.5" y2="707" stroke="#d3d3d3" stroke-width="1.2"/><line x1="455.5" y1="401" x2="455.5" y2="707" stroke="#d3d3d3" stroke-width="1.2"/><line x1="469.5" y1="401" x2="469.5" y2="707" stroke="#d3d3d3" stroke-width="1.2"/><line x1="482.5" y1="401" x2="482.5" y2="707" stroke="#d3d3d3" stroke-width="1.2"/><line x1="495.5" y1="401" x2="495.5" y2="707" stroke="#8e8e8e" stroke-width="1.2"/><line x1="509.5" y1="401" x2="509.5" y2="707" stroke="#d3d3d3" stroke-width="1.2"/><line x1="522.5" y1="401" x2="522.5" y2="707" stroke="#d3d3d3" stroke-width="1.2"/><line x1="535.5" y1="401" x2="535.5" y2="707" stroke="#d3d3d3" stroke-width="1.2"/><line x1="549.5" y1="401" x2="549.5" y2="707" stroke="#d3d3d3" stroke-width="1.2"/><line x1="562.5" y1="401" x2="562.5" y2="707" stroke="#d3d3d3" stroke-width="1.2"/><line x1="575.5" y1="401" x2="575.5" y2="707" stroke="#d3d3d3" stroke-width="1.2"/><line x1="589.5" y1="401" x2="589.5" y2="707" stroke="#d3d3d3" stroke-width="1.2"/><line x1="602.5" y1="401" x2="602.5" y2="707" stroke="#d3d3d3" stroke-width="1.2"/><line x1="615.5" y1="401" x2="615.5" y2="707" stroke="#d3d3d3" stroke-width="1.2"/><line x1="629.5" y1="401" x2="629.5" y2="707" stroke="#8e8e8e" stroke-width="1.2"/><line x1="642.5" y1="401" x2="642.5" y2="707" stroke="#d3d3d3" stroke-width="1.2"/><line x1="655.5" y1="401" x2="655.5" y2="707" stroke="#d3d3d3" stroke-width="1.2"/><line x1="669.5" y1="401" x2="669.5" y2="707" stroke="#d3d3d3" stroke-width="1.2"/><line x1="682.5" y1="401" x2="682.5" y2="707" stroke="#d3d3d3" stroke-width="1.2"/><line x1="695.5" y1="401" x2="695.5" y2="707" stroke="#d3d3d3" stroke-width="1.2"/><line x1="709.5" y1="401" x2="709.5" y2="707" stroke="#d3d3d3" stroke-width="1.2"/><line x1="722.5" y1="401" x2="722.5" y2="707" stroke="#d3d3d3" stroke-width="1.2"/><line x1="735.5" y1="401" x2="735.5" y2="707" stroke="#d3d3d3" stroke-width="1.2"/><line x1="749.5" y1="401" x2="749.5" y2="707" stroke="#d3d3d3" stroke-width="1.2"/><line x1="762.5" y1="401" x2="762.5" y2="707" stroke="#8e8e8e" stroke-width="1.2"/><line x1="775.5" y1="401" x2="775.5" y2="707" stroke="#d3d3d3" stroke-width="1.2"/><line x1="789.5" y1="401" x2="789.5" y2="707" stroke="#d3d3d3" stroke-width="1.2"/><line x1="802.5" y1="401" x2="802.5" y2="707" stroke="#d3d3d3" stroke-width="1.2"/><line x1="816.5" y1="401" x2="816.5" y2="707" stroke="#d3d3d3" stroke-width="1.2"/><line x1="829.5" y1="401" x2="829.5" y2="707" stroke="#d3d3d3" stroke-width="1.2"/><line x1="842.5" y1="401" x2="842.5" y2="707" stroke="#d3d3d3" stroke-width="1.2"/><line x1="856.5" y1="401" x2="856.5" y2="707" stroke="#d3d3d3" stroke-width="1.2"/><line x1="869.5" y1="401" x2="869.5" y2="707" stroke="#d3d3d3" stroke-width="1.2"/><line x1="882.5" y1="401" x2="882.5" y2="707" stroke="#d3d3d3" stroke-width="1.2"/><line x1="896.5" y1="401" x2="896.5" y2="707" stroke="#8e8e8e" stroke-width="1.2"/><line x1="909.5" y1="401" x2="909.5" y2="707" stroke="#d3d3d3" stroke-width="1.2"/><line x1="922.5" y1="401" x2="922.5" y2="707" stroke="#d3d3d3" stroke-width="1.2"/><line x1="936.5" y1="401" x2="936.5" y2="707" stroke="#d3d3d3" stroke-width="1.2"/><line x1="949.5" y1="401" x2="949.5" y2="707" stroke="#d3d3d3" stroke-width="1.2"/><line x1="962.5" y1="401" x2="962.5" y2="707" stroke="#d3d3d3" stroke-width="1.2"/><line x1="976.5" y1="401" x2="976.5" y2="707" stroke="#d3d3d3" stroke-width="1.2"/><line x1="989.5" y1="401" x2="989.5" y2="707" stroke="#d3d3d3" stroke-width="1.2"/><line x1="1002.5" y1="401" x2="1002.5" y2="707" stroke="#d3d3d3" stroke-width="1.2"/><line x1="1016.5" y1="401" x2="1016.5" y2="707" stroke="#d3d3d3" stroke-width="1.2"/><line x1="1029.5" y1="401" x2="1029.5" y2="707" stroke="#8e8e8e" stroke-width="1.2"/><line x1="1042.5" y1="401" x2="1042.5" y2="707" stroke="#d3d3d3" stroke-width="1.2"/><line x1="1056.5" y1="401" x2="1056.5" y2="707" stroke="#d3d3d3" stroke-width="1.2"/><line x1="1069.5" y1="401" x2="1069.5" y2="707" stroke="#d3d3d3" stroke-width="1.2"/><line x1="1082.5" y1="401" x2="1082.5" y2="707" stroke="#d3d3d3" stroke-width="1.2"/><line x1="1096.5" y1="401" x2="1096.5" y2="707" stroke="#d3d3d3" stroke-width="1.2"/><line x1="1109.5" y1="401" x2="1109.5" y2="707" stroke="#d3d3d3" stroke-width="1.2"/><line x1="1122.5" y1="401" x2="1122.5" y2="707" stroke="#d3d3d3" stroke-width="1.2"/><line x1="1136.5" y1="401" x2="1136.5" y2="707" stroke="#d3d3d3" stroke-width="1.2"/><line x1="1149.5" y1="401" x2="1149.5" y2="707" stroke="#d3d3d3" stroke-width="1.2"/><line x1="1162.5" y1="401" x2="1162.5" y2="707" stroke="#8e8e8e" stroke-width="1.2"/><line x1="1176.5" y1="401" x2="1176.5" y2="707" stroke="#d3d3d3" stroke-width="1.2"/><line x1="1189.5" y1="401" x2="1189.5" y2="707" stroke="#d3d3d3" stroke-width="1.2"/><line x1="1202.5" y1="401" x2="1202.5" y2="707" stroke="#d3d3d3" stroke-width="1.2"/><line x1="1216.5" y1="401" x2="1216.5" y2="707" stroke="#d3d3d3" stroke-width="1.2"/><line x1="1229.5" y1="401" x2="1229.5" y2="707" stroke="#d3d3d3" stroke-width="1.2"/><line x1="1242.5" y1="401" x2="1242.5" y2="707" stroke="#d3d3d3" stroke-width="1.2"/><line x1="1256.5" y1="401" x2="1256.5" y2="707" stroke="#d3d3d3" stroke-width="1.2"/><line x1="1269.5" y1="401" x2="1269.5" y2="707" stroke="#d3d3d3" stroke-width="1.2"/><line x1="1283.5" y1="401" x2="1283.5" y2="707" stroke="#d3d3d3" stroke-width="1.2"/><line x1="1296.5" y1="401" x2="1296.5" y2="707" stroke="#8e8e8e" stroke-width="1.2"/><line x1="1309.5" y1="401" x2="1309.5" y2="707" stroke="#d3d3d3" stroke-width="1.2"/><line x1="1323.5" y1="401" x2="1323.5" y2="707" stroke="#d3d3d3" stroke-width="1.2"/><line x1="1336.5" y1="401" x2="1336.5" y2="707" stroke="#d3d3d3" stroke-width="1.2"/><line x1="1349.5" y1="401" x2="1349.5" y2="707" stroke="#d3d3d3" stroke-width="1.2"/><line x1="15" y1="416.5" x2="1350" y2="416.5" stroke="#d3d3d3" stroke-width="1.2"/><line x1="15" y1="431.5" x2="1350" y2="431.5" stroke="#d3d3d3" stroke-width="1.2"/><line x1="15" y1="446.5" x2="1350" y2="446.5" stroke="#d3d3d3" stroke-width="1.2"/><line x1="15" y1="462.5" x2="1350" y2="462.5" stroke="#d3d3d3" stroke-width="1.2"/><line x1="15" y1="477.5" x2="1350" y2="477.5" stroke="#d3d3d3" stroke-width="1.2"/><line x1="15" y1="492.5" x2="1350" y2="492.5" stroke="#d3d3d3" stroke-width="1.2"/><line x1="15" y1="508.5" x2="1350" y2="508.5" stroke="#d3d3d3" stroke-width="1.2"/><line x1="15" y1="523.5" x2="1350" y2="523.5" stroke="#d3d3d3" stroke-width="1.2"/><line x1="15" y1="538.5" x2="1350" y2="538.5" stroke="#d3d3d3" stroke-width="1.2"/><line x1="15" y1="569.5" x2="1350" y2="569.5" stroke="#d3d3d3" stroke-width="1.2"/><line x1="15" y1="584.5" x2="1350" y2="584.5" stroke="#d3d3d3" stroke-width="1.2"/><line x1="15" y1="600.5" x2="1350" y2="600.5" stroke="#d3d3d3" stroke-width="1.2"/><line x1="15" y1="615.5" x2="1350" y2="615.5" stroke="#d3d3d3" stroke-width="1.2"/><line x1="15" y1="630.5" x2="1350" y2="630.5" stroke="#d3d3d3" stroke-width="1.2"/><line x1="15" y1="645.5" x2="1350" y2="645.5" stroke="#d3d3d3" stroke-width="1.2"/><line x1="15" y1="661.5" x2="1350" y2="661.5" stroke="#d3d3d3" stroke-width="1.2"/><line x1="15" y1="676.5" x2="1350" y2="676.5" stroke="#d3d3d3" stroke-width="1.2"/><line x1="15" y1="691.5" x2="1350" y2="691.5" stroke="#d3d3d3" stroke-width="1.2"/><line x1="15" y1="707.5" x2="1350" y2="707.5" stroke="#d3d3d3" stroke-width="1.2"/><line x1="15" y1="401.5" x2="1350" y2="401.5" stroke="#b2d67a" stroke-width="1.3"/><line x1="15" y1="553.5" x2="1350" y2="553.5" stroke="#b2d67a" stroke-width="1.3"/></g><text x="93.3" y="397.8" font-size="10.6" textLength="17.2" lengthAdjust="spacingAndGlyphs" fill="#000">400</text><text x="226.7" y="397.8" font-size="10.6" textLength="17.2" lengthAdjust="spacingAndGlyphs" fill="#000">500</text><text x="360.2" y="397.8" font-size="10.6" textLength="17.2" lengthAdjust="spacingAndGlyphs" fill="#000">600</text><text x="493.6" y="397.8" font-size="10.6" textLength="17.2" lengthAdjust="spacingAndGlyphs" fill="#000">700</text><text x="627.0" y="397.8" font-size="10.6" textLength="17.2" lengthAdjust="spacingAndGlyphs" fill="#000">800</text><text x="760.5" y="397.8" font-size="10.6" textLength="17.2" lengthAdjust="spacingAndGlyphs" fill="#000">900</text><text x="893.9" y="397.8" font-size="10.6" textLength="23" lengthAdjust="spacingAndGlyphs" fill="#000">1000</text><text x="1027.3" y="397.8" font-size="10.6" textLength="23" lengthAdjust="spacingAndGlyphs" fill="#000">1100</text><text x="1160.7" y="397.8" font-size="10.6" textLength="23" lengthAdjust="spacingAndGlyphs" fill="#000">1200</text><text x="1294.2" y="397.8" font-size="10.6" textLength="23" lengthAdjust="spacingAndGlyphs" fill="#000">1300</text><path d="M15,707 L15.0,670.7 L20.5,670.2 L24.9,671.0 L29.2,671.8 L33.5,671.2 L35.7,673.4 L43.3,671.5 L48.7,671.8 L52.0,673.4 L57.4,672.5 L60.7,674.0 L64.5,671.2 L67.2,673.4 L71.5,678.8 L74.8,676.9 L81.3,676.7 L85.7,674.9 L90.0,674.0 L95.4,673.2 L98.7,670.7 L105.2,669.9 L109.5,672.9 L113.9,675.6 L118.2,675.7 L122.5,677.2 L128.0,677.8 L133.4,674.5 L137.7,664.7 L141.0,651.7 L142.6,644.1 L144.2,646.3 L145.9,660.4 L148.6,676.7 L151.8,681.0 L157.3,679.4 L162.7,681.0 L164.3,678.9 L168.6,678.6 L172.9,680.0 L176.1,681.4 L180.4,682.1 L184.7,682.5 L188.0,681.4 L195.5,681.1 L200.9,678.4 L203.0,675.2 L206.2,661.2 L208.4,649.4 L210.0,646.1 L211.6,648.3 L217.0,661.2 L224.5,671.9 L229.9,678.4 L235.3,682.7 L240.6,682.5 L246.0,684.3 L251.4,685.1 L256.8,683.2 L262.2,685.4 L266.5,682.7 L269.7,684.3 L273.4,676.2 L276.1,677.3 L279.0,661.8 L281.8,631.7 L283.3,591.9 L284.2,562.0 L284.6,549.3 L285.2,562.0 L285.9,571.5 L287.4,589.8 L288.2,571.5 L289.3,555.0 L289.5,496.0 L291.5,496.0 L291.9,520.0 L292.4,570.4 L293.0,599.5 L297.3,636.0 L302.6,670.4 L310.2,678.0 L316.6,678.6 L320.9,680.1 L325.2,679.8 L329.5,681.2 L331.1,664.9 L333.1,648.8 L337.1,634.7 L341.1,622.6 L344.2,625.6 L345.2,611.5 L346.4,573.1 L347.2,584.2 L347.8,610.4 L350.2,638.7 L352.6,614.5 L354.7,591.3 L356.3,610.4 L359.3,646.8 L362.9,625.6 L364.3,634.7 L368.4,656.9 L372.4,644.7 L375.4,616.5 L375.9,534.0 L376.8,458.0 L377.4,402.0 L379.3,402.0 L380.2,458.0 L382.8,534.0 L383.9,560.0 L385.5,584.2 L389.6,640.7 L395.6,635.7 L400.7,633.6 L402.7,635.7 L404.7,616.5 L406.7,628.6 L408.7,662.9 L411.8,675.0 L415.0,679.0 L419.7,682.2 L426.1,682.5 L429.4,677.3 L431.5,671.4 L433.7,673.0 L438.0,682.2 L442.3,682.5 L446.6,678.4 L453.0,685.4 L458.4,685.7 L465.9,685.4 L471.3,686.8 L477.7,681.4 L485.3,685.4 L490.6,671.9 L492.8,673.0 L496.0,685.9 L501.4,680.5 L505.2,655.8 L506.8,656.9 L510.0,671.9 L513.2,676.2 L519.7,687.5 L525.0,686.8 L531.5,686.5 L533.1,685.2 L537.9,689.2 L541.1,686.8 L544.7,671.5 L547.6,681.9 L550.8,687.6 L555.6,686.8 L558.9,675.5 L561.8,654.5 L564.5,670.6 L567.7,686.5 L574.2,686.5 L576.3,654.5 L577.9,603.7 L579.5,641.6 L581.5,680.3 L585.5,686.8 L588.7,657.7 L592.7,686.8 L595.9,687.0 L599.2,687.0 L602.4,686.7 L605.6,687.8 L608.9,687.2 L612.1,688.4 L615.0,685.2 L617.7,664.2 L620.2,680.3 L622.6,685.2 L626.1,651.3 L628.1,672.9 L630.1,685.0 L634.1,681.0 L636.1,626.5 L638.5,568.1 L641.2,652.7 L643.2,685.0 L650.2,687.4 L654.3,683.0 L657.9,674.5 L661.3,683.0 L664.4,687.4 L672.4,683.0 L675.4,634.6 L677.9,629.6 L680.5,656.8 L683.5,686.0 L687.5,685.0 L690.6,678.5 L694.6,687.0 L700.6,689.0 L704.7,688.0 L708.7,687.4 L712.7,689.0 L720.0,689.0 L723.1,688.0 L726.3,687.9 L729.4,688.3 L732.6,688.9 L735.7,687.5 L738.9,687.5 L742.0,688.1 L745.1,688.6 L748.3,687.8 L751.4,687.3 L754.6,688.2 L757.7,686.4 L760.9,687.7 L764.0,687.0 L766.3,667.3 L767.9,664.3 L769.0,665.5 L771.0,680.5 L772.9,687.0 L777.1,685.1 L781.4,684.2 L784.6,689.0 L787.6,687.7 L790.6,687.1 L793.7,686.9 L796.7,687.3 L799.7,686.3 L802.8,686.2 L805.8,687.5 L808.9,688.2 L811.9,688.3 L815.0,689.2 L818.0,688.8 L821.0,687.5 L824.0,687.1 L827.0,686.9 L830.0,687.4 L833.0,686.5 L836.0,686.3 L840.0,689.0 L843.0,688.6 L846.0,689.1 L849.0,688.8 L852.0,688.5 L855.0,689.4 L858.0,689.3 L861.0,688.4 L864.0,689.0 L867.0,688.9 L870.0,689.6 L873.0,689.3 L876.0,688.5 L879.0,689.8 L882.0,688.2 L885.0,688.8 L888.0,689.4 L891.0,688.3 L894.0,688.9 L897.0,688.1 L900.0,689.0 L903.0,689.2 L906.1,689.3 L909.1,689.0 L912.2,689.5 L915.2,688.5 L918.3,689.1 L921.3,688.9 L924.4,688.9 L927.4,688.6 L930.5,689.3 L933.5,689.5 L936.5,688.6 L939.6,688.9 L942.6,687.8 L945.7,688.9 L948.7,688.8 L951.8,689.4 L954.8,689.1 L957.9,688.1 L960.9,688.2 L964.0,688.7 L967.0,688.5 L970.0,687.6 L973.0,688.5 L976.0,688.0 L979.0,688.0 L982.0,687.9 L985.0,689.3 L988.0,688.2 L991.0,688.5 L994.0,688.8 L997.0,689.7 L1000.0,689.2 L1003.0,688.2 L1006.0,688.8 L1009.0,688.8 L1012.0,689.3 L1015.0,689.1 L1018.0,689.0 L1021.0,687.8 L1024.0,688.0 L1027.0,687.7 L1030.0,688.6 L1033.0,688.6 L1036.0,687.0 L1039.0,686.9 L1042.0,686.9 L1045.0,686.8 L1048.0,687.1 L1051.0,687.2 L1054.0,686.5 L1057.0,685.9 L1060.0,686.5 L1063.0,686.3 L1066.0,686.5 L1070.0,689.6 L1073.5,689.3 L1076.9,689.6 L1080.4,688.8 L1083.9,688.2 L1087.3,688.0 L1090.8,687.6 L1093.9,687.9 L1097.0,686.9 L1100.1,688.6 L1103.2,688.5 L1106.3,688.8 L1109.3,688.7 L1112.4,688.1 L1115.5,688.3 L1118.6,687.8 L1121.7,688.9 L1124.8,688.0 L1127.9,689.0 L1131.1,687.9 L1134.2,687.8 L1137.4,687.5 L1140.5,687.6 L1143.7,686.8 L1146.8,686.4 L1150.0,686.4 L1153.1,686.1 L1156.3,686.3 L1159.4,685.4 L1162.6,686.1 L1165.7,685.3 L1168.8,683.5 L1171.9,682.0 L1175.9,679.2 L1180.0,681.8 L1185.8,682.3 L1189.7,681.8 L1193.5,682.2 L1197.4,683.0 L1200.7,682.4 L1204.1,682.2 L1207.4,681.5 L1210.7,682.5 L1214.1,682.5 L1217.4,681.5 L1220.6,681.4 L1223.9,681.5 L1227.1,680.8 L1230.4,680.9 L1233.6,681.8 L1236.6,681.9 L1239.6,682.3 L1242.6,683.9 L1245.6,683.2 L1248.6,684.4 L1251.8,683.3 L1255.1,684.8 L1258.3,683.8 L1261.6,682.9 L1264.8,683.5 L1268.0,682.4 L1271.3,683.1 L1274.5,683.7 L1277.8,683.3 L1281.0,682.6 L1284.2,682.9 L1287.3,682.1 L1290.5,682.3 L1293.7,681.9 L1296.8,683.0 L1300.0,682.6 L1303.1,683.0 L1306.3,682.2 L1309.5,682.0 L1312.6,683.1 L1315.8,682.6 L1318.9,682.9 L1322.0,682.2 L1325.0,681.6 L1328.1,681.1 L1331.2,680.5 L1334.3,679.7 L1337.4,679.3 L1340.6,680.0 L1343.7,679.9 L1346.9,679.6 L1350.0,680.7 L1350,707 Z" fill="url(#spec)"/><polyline points="15.0,670.7 20.5,670.2 24.9,671.0 29.2,671.8 33.5,671.2 35.7,673.4 43.3,671.5 48.7,671.8 52.0,673.4 57.4,672.5 60.7,674.0 64.5,671.2 67.2,673.4 71.5,678.8 74.8,676.9 81.3,676.7 85.7,674.9 90.0,674.0 95.4,673.2 98.7,670.7 105.2,669.9 109.5,672.9 113.9,675.6 118.2,675.7 122.5,677.2 128.0,677.8 133.4,674.5 137.7,664.7 141.0,651.7 142.6,644.1 144.2,646.3 145.9,660.4 148.6,676.7 151.8,681.0 157.3,679.4 162.7,681.0 164.3,678.9 168.6,678.6 172.9,680.0 176.1,681.4 180.4,682.1 184.7,682.5 188.0,681.4 195.5,681.1 200.9,678.4 203.0,675.2 206.2,661.2 208.4,649.4 210.0,646.1 211.6,648.3 217.0,661.2 224.5,671.9 229.9,678.4 235.3,682.7 240.6,682.5 246.0,684.3 251.4,685.1 256.8,683.2 262.2,685.4 266.5,682.7 269.7,684.3 273.4,676.2 276.1,677.3 279.0,661.8 281.8,631.7 283.3,591.9 284.2,562.0 284.6,549.3 285.2,562.0 285.9,571.5 287.4,589.8 288.2,571.5 289.3,555.0 289.5,496.0 291.5,496.0 291.9,520.0 292.4,570.4 293.0,599.5 297.3,636.0 302.6,670.4 310.2,678.0 316.6,678.6 320.9,680.1 325.2,679.8 329.5,681.2 331.1,664.9 333.1,648.8 337.1,634.7 341.1,622.6 344.2,625.6 345.2,611.5 346.4,573.1 347.2,584.2 347.8,610.4 350.2,638.7 352.6,614.5 354.7,591.3 356.3,610.4 359.3,646.8 362.9,625.6 364.3,634.7 368.4,656.9 372.4,644.7 375.4,616.5 375.9,534.0 376.8,458.0 377.4,402.0 379.3,402.0 380.2,458.0 382.8,534.0 383.9,560.0 385.5,584.2 389.6,640.7 395.6,635.7 400.7,633.6 402.7,635.7 404.7,616.5 406.7,628.6 408.7,662.9 411.8,675.0 415.0,679.0 419.7,682.2 426.1,682.5 429.4,677.3 431.5,671.4 433.7,673.0 438.0,682.2 442.3,682.5 446.6,678.4 453.0,685.4 458.4,685.7 465.9,685.4 471.3,686.8 477.7,681.4 485.3,685.4 490.6,671.9 492.8,673.0 496.0,685.9 501.4,680.5 505.2,655.8 506.8,656.9 510.0,671.9 513.2,676.2 519.7,687.5 525.0,686.8 531.5,686.5 533.1,685.2 537.9,689.2 541.1,686.8 544.7,671.5 547.6,681.9 550.8,687.6 555.6,686.8 558.9,675.5 561.8,654.5 564.5,670.6 567.7,686.5 574.2,686.5 576.3,654.5 577.9,603.7 579.5,641.6 581.5,680.3 585.5,686.8 588.7,657.7 592.7,686.8 595.9,687.0 599.2,687.0 602.4,686.7 605.6,687.8 608.9,687.2 612.1,688.4 615.0,685.2 617.7,664.2 620.2,680.3 622.6,685.2 626.1,651.3 628.1,672.9 630.1,685.0 634.1,681.0 636.1,626.5 638.5,568.1 641.2,652.7 643.2,685.0 650.2,687.4 654.3,683.0 657.9,674.5 661.3,683.0 664.4,687.4 672.4,683.0 675.4,634.6 677.9,629.6 680.5,656.8 683.5,686.0 687.5,685.0 690.6,678.5 694.6,687.0 700.6,689.0 704.7,688.0 708.7,687.4 712.7,689.0 720.0,689.0 723.1,688.0 726.3,687.9 729.4,688.3 732.6,688.9 735.7,687.5 738.9,687.5 742.0,688.1 745.1,688.6 748.3,687.8 751.4,687.3 754.6,688.2 757.7,686.4 760.9,687.7 764.0,687.0 766.3,667.3 767.9,664.3 769.0,665.5 771.0,680.5 772.9,687.0 777.1,685.1 781.4,684.2 784.6,689.0 787.6,687.7 790.6,687.1 793.7,686.9 796.7,687.3 799.7,686.3 802.8,686.2 805.8,687.5 808.9,688.2 811.9,688.3 815.0,689.2 818.0,688.8 821.0,687.5 824.0,687.1 827.0,686.9 830.0,687.4 833.0,686.5 836.0,686.3 840.0,689.0 843.0,688.6 846.0,689.1 849.0,688.8 852.0,688.5 855.0,689.4 858.0,689.3 861.0,688.4 864.0,689.0 867.0,688.9 870.0,689.6 873.0,689.3 876.0,688.5 879.0,689.8 882.0,688.2 885.0,688.8 888.0,689.4 891.0,688.3 894.0,688.9 897.0,688.1 900.0,689.0 903.0,689.2 906.1,689.3 909.1,689.0 912.2,689.5 915.2,688.5 918.3,689.1 921.3,688.9 924.4,688.9 927.4,688.6 930.5,689.3 933.5,689.5 936.5,688.6 939.6,688.9 942.6,687.8 945.7,688.9 948.7,688.8 951.8,689.4 954.8,689.1 957.9,688.1 960.9,688.2 964.0,688.7 967.0,688.5 970.0,687.6 973.0,688.5 976.0,688.0 979.0,688.0 982.0,687.9 985.0,689.3 988.0,688.2 991.0,688.5 994.0,688.8 997.0,689.7 1000.0,689.2 1003.0,688.2 1006.0,688.8 1009.0,688.8 1012.0,689.3 1015.0,689.1 1018.0,689.0 1021.0,687.8 1024.0,688.0 1027.0,687.7 1030.0,688.6 1033.0,688.6 1036.0,687.0 1039.0,686.9 1042.0,686.9 1045.0,686.8 1048.0,687.1 1051.0,687.2 1054.0,686.5 1057.0,685.9 1060.0,686.5 1063.0,686.3 1066.0,686.5 1070.0,689.6 1073.5,689.3 1076.9,689.6 1080.4,688.8 1083.9,688.2 1087.3,688.0 1090.8,687.6 1093.9,687.9 1097.0,686.9 1100.1,688.6 1103.2,688.5 1106.3,688.8 1109.3,688.7 1112.4,688.1 1115.5,688.3 1118.6,687.8 1121.7,688.9 1124.8,688.0 1127.9,689.0 1131.1,687.9 1134.2,687.8 1137.4,687.5 1140.5,687.6 1143.7,686.8 1146.8,686.4 1150.0,686.4 1153.1,686.1 1156.3,686.3 1159.4,685.4 1162.6,686.1 1165.7,685.3 1168.8,683.5 1171.9,682.0 1175.9,679.2 1180.0,681.8 1185.8,682.3 1189.7,681.8 1193.5,682.2 1197.4,683.0 1200.7,682.4 1204.1,682.2 1207.4,681.5 1210.7,682.5 1214.1,682.5 1217.4,681.5 1220.6,681.4 1223.9,681.5 1227.1,680.8 1230.4,680.9 1233.6,681.8 1236.6,681.9 1239.6,682.3 1242.6,683.9 1245.6,683.2 1248.6,684.4 1251.8,683.3 1255.1,684.8 1258.3,683.8 1261.6,682.9 1264.8,683.5 1268.0,682.4 1271.3,683.1 1274.5,683.7 1277.8,683.3 1281.0,682.6 1284.2,682.9 1287.3,682.1 1290.5,682.3 1293.7,681.9 1296.8,683.0 1300.0,682.6 1303.1,683.0 1306.3,682.2 1309.5,682.0 1312.6,683.1 1315.8,682.6 1318.9,682.9 1322.0,682.2 1325.0,681.6 1328.1,681.1 1331.2,680.5 1334.3,679.7 1337.4,679.3 1340.6,680.0 1343.7,679.9 1346.9,679.6 1350.0,680.7" fill="none" stroke="#0f2a10" stroke-width="1.15" stroke-linejoin="miter"/><line x1="45.5" y1="671.6" x2="45.5" y2="707" stroke="#b4262a" stroke-width="1.3" opacity="0.9"/><line x1="105.5" y1="669.9" x2="105.5" y2="707" stroke="#b4262a" stroke-width="1.3" opacity="0.9"/><line x1="142.5" y1="644.6" x2="142.5" y2="707" stroke="#b4262a" stroke-width="1.3" opacity="0.9"/><line x1="209.5" y1="647.1" x2="209.5" y2="707" stroke="#b4262a" stroke-width="1.3" opacity="0.9"/><line x1="290.5" y1="496.0" x2="290.5" y2="707" stroke="#b4262a" stroke-width="1.3" opacity="0.9"/><line x1="346.5" y1="579.5" x2="346.5" y2="707" stroke="#b4262a" stroke-width="1.3" opacity="0.9"/><line x1="378.5" y1="402.0" x2="378.5" y2="707" stroke="#b4262a" stroke-width="1.3" opacity="0.9"/><line x1="431.5" y1="671.4" x2="431.5" y2="707" stroke="#b4262a" stroke-width="1.3" opacity="0.9"/><line x1="505.5" y1="655.8" x2="505.5" y2="707" stroke="#b4262a" stroke-width="1.3" opacity="0.9"/><line x1="578.5" y1="610.8" x2="578.5" y2="707" stroke="#b4262a" stroke-width="1.3" opacity="0.9"/><line x1="638.5" y1="568.1" x2="638.5" y2="707" stroke="#b4262a" stroke-width="1.3" opacity="0.9"/><line x1="677.5" y1="630.4" x2="677.5" y2="707" stroke="#b4262a" stroke-width="1.3" opacity="0.9"/><line x1="768.5" y1="665.1" x2="768.5" y2="707" stroke="#b4262a" stroke-width="1.3" opacity="0.9"/><line x1="836.5" y1="686.7" x2="836.5" y2="707" stroke="#b4262a" stroke-width="1.3" opacity="0.9"/><line x1="866.5" y1="689.0" x2="866.5" y2="707" stroke="#b4262a" stroke-width="1.3" opacity="0.9"/><line x1="899.5" y1="688.8" x2="899.5" y2="707" stroke="#b4262a" stroke-width="1.3" opacity="0.9"/><line x1="933.5" y1="689.4" x2="933.5" y2="707" stroke="#b4262a" stroke-width="1.3" opacity="0.9"/><line x1="967.5" y1="688.4" x2="967.5" y2="707" stroke="#b4262a" stroke-width="1.3" opacity="0.9"/><line x1="999.5" y1="689.3" x2="999.5" y2="707" stroke="#b4262a" stroke-width="1.3" opacity="0.9"/><line x1="1033.5" y1="688.5" x2="1033.5" y2="707" stroke="#b4262a" stroke-width="1.3" opacity="0.9"/><line x1="1066.5" y1="687.0" x2="1066.5" y2="707" stroke="#b4262a" stroke-width="1.3" opacity="0.9"/><line x1="1091.5" y1="687.7" x2="1091.5" y2="707" stroke="#b4262a" stroke-width="1.3" opacity="0.9"/><line x1="1135.5" y1="687.7" x2="1135.5" y2="707" stroke="#b4262a" stroke-width="1.3" opacity="0.9"/><line x1="1175.5" y1="679.6" x2="1175.5" y2="707" stroke="#b4262a" stroke-width="1.3" opacity="0.9"/><line x1="1233.5" y1="681.7" x2="1233.5" y2="707" stroke="#b4262a" stroke-width="1.3" opacity="0.9"/><line x1="1282.5" y1="682.7" x2="1282.5" y2="707" stroke="#b4262a" stroke-width="1.3" opacity="0.9"/><line x1="143.5" y1="402" x2="143.5" y2="707" stroke="#000" stroke-width="1" stroke-dasharray="1 1.2"/><line x1="290.5" y1="402" x2="290.5" y2="707" stroke="#000" stroke-width="1" stroke-dasharray="1 1.2"/><rect x="31.3" y="688.7" width="26" height="13.8" fill="#ffff00" stroke="#2f7a1e" stroke-width="1.2"/><text x="34.4" y="700.3" font-size="12" textLength="19.7" lengthAdjust="spacingAndGlyphs" fill="#000">362</text><rect x="91.2" y="688.7" width="26" height="13.8" fill="#ffff00" stroke="#2f7a1e" stroke-width="1.2"/><text x="94.4" y="700.3" font-size="12" textLength="19.7" lengthAdjust="spacingAndGlyphs" fill="#000">407</text><rect x="129.0" y="688.7" width="26" height="13.8" fill="#ffff00" stroke="#2f7a1e" stroke-width="1.2"/><text x="132.2" y="700.3" font-size="12" textLength="19.7" lengthAdjust="spacingAndGlyphs" fill="#000">435</text><rect x="195.5" y="688.6" width="26" height="13.8" fill="#ffff00" stroke="#2f7a1e" stroke-width="1.2"/><text x="198.7" y="700.2" font-size="12" textLength="19.7" lengthAdjust="spacingAndGlyphs" fill="#000">485</text><rect x="276.4" y="688.7" width="26" height="13.8" fill="#ffff00" stroke="#2f7a1e" stroke-width="1.2"/><text x="279.5" y="700.3" font-size="12" textLength="19.7" lengthAdjust="spacingAndGlyphs" fill="#000">546</text><rect x="332.2" y="688.7" width="26" height="13.8" fill="#ffff00" stroke="#2f7a1e" stroke-width="1.2"/><text x="335.3" y="700.3" font-size="12" textLength="19.7" lengthAdjust="spacingAndGlyphs" fill="#000">588</text><rect x="364.5" y="688.7" width="26" height="13.8" fill="#ffff00" stroke="#2f7a1e" stroke-width="1.2"/><text x="367.6" y="700.3" font-size="12" textLength="19.7" lengthAdjust="spacingAndGlyphs" fill="#000">612</text><rect x="417.5" y="688.6" width="26" height="13.8" fill="#ffff00" stroke="#2f7a1e" stroke-width="1.2"/><text x="420.6" y="700.2" font-size="12" textLength="19.7" lengthAdjust="spacingAndGlyphs" fill="#000">652</text><rect x="491.2" y="688.6" width="26" height="13.8" fill="#ffff00" stroke="#2f7a1e" stroke-width="1.2"/><text x="494.3" y="700.2" font-size="12" textLength="19.7" lengthAdjust="spacingAndGlyphs" fill="#000">707</text><rect x="564.2" y="688.7" width="26" height="13.8" fill="#ffff00" stroke="#2f7a1e" stroke-width="1.2"/><text x="567.4" y="700.3" font-size="12" textLength="19.7" lengthAdjust="spacingAndGlyphs" fill="#000">762</text><rect x="624.5" y="689.0" width="26" height="13.8" fill="#ffff00" stroke="#2f7a1e" stroke-width="1.2"/><text x="627.6" y="700.6" font-size="12" textLength="19.7" lengthAdjust="spacingAndGlyphs" fill="#000">807</text><rect x="663.5" y="689.0" width="26" height="13.8" fill="#ffff00" stroke="#2f7a1e" stroke-width="1.2"/><text x="666.6" y="700.6" font-size="12" textLength="19.7" lengthAdjust="spacingAndGlyphs" fill="#000">836</text><rect x="754.6" y="688.5" width="26" height="13.8" fill="#ffff00" stroke="#2f7a1e" stroke-width="1.2"/><text x="757.8" y="700.1" font-size="12" textLength="19.7" lengthAdjust="spacingAndGlyphs" fill="#000">904</text><rect x="822.6" y="668.3" width="26" height="13.8" fill="#ffff00" stroke="#2f7a1e" stroke-width="1.2"/><text x="825.8" y="679.9" font-size="12" textLength="19.7" lengthAdjust="spacingAndGlyphs" fill="#000">956</text><rect x="852.5" y="670.3" width="26" height="13.8" fill="#ffff00" stroke="#2f7a1e" stroke-width="1.2"/><text x="855.6" y="681.9" font-size="12" textLength="19.7" lengthAdjust="spacingAndGlyphs" fill="#000">978</text><rect x="885.5" y="670.3" width="34" height="13.8" fill="#ffff00" stroke="#2f7a1e" stroke-width="1.2"/><text x="889.4" y="681.9" font-size="12" textLength="26.3" lengthAdjust="spacingAndGlyphs" fill="#000">1003</text><rect x="919.1" y="670.3" width="34" height="13.8" fill="#ffff00" stroke="#2f7a1e" stroke-width="1.2"/><text x="923.0" y="681.9" font-size="12" textLength="26.3" lengthAdjust="spacingAndGlyphs" fill="#000">1028</text><rect x="953.2" y="670.8" width="34" height="13.8" fill="#ffff00" stroke="#2f7a1e" stroke-width="1.2"/><text x="957.1" y="682.4" font-size="12" textLength="26.3" lengthAdjust="spacingAndGlyphs" fill="#000">1054</text><rect x="985.4" y="669.5" width="34" height="13.8" fill="#ffff00" stroke="#2f7a1e" stroke-width="1.2"/><text x="989.2" y="681.1" font-size="12" textLength="26.3" lengthAdjust="spacingAndGlyphs" fill="#000">1078</text><rect x="1019.2" y="670.8" width="34" height="13.8" fill="#ffff00" stroke="#2f7a1e" stroke-width="1.2"/><text x="1023.1" y="682.4" font-size="12" textLength="26.3" lengthAdjust="spacingAndGlyphs" fill="#000">1103</text><rect x="1052.6" y="668.3" width="26" height="13.8" fill="#ffff00" stroke="#2f7a1e" stroke-width="1.2"/><text x="1055.8" y="679.9" font-size="12" textLength="19.7" lengthAdjust="spacingAndGlyphs" fill="#000">112</text><rect x="1077.4" y="668.4" width="34" height="13.8" fill="#ffff00" stroke="#2f7a1e" stroke-width="1.2"/><text x="1081.2" y="680.0" font-size="12" textLength="26.3" lengthAdjust="spacingAndGlyphs" fill="#000">1147</text><rect x="1121.4" y="669.3" width="34" height="13.8" fill="#ffff00" stroke="#2f7a1e" stroke-width="1.2"/><text x="1125.2" y="680.9" font-size="12" textLength="26.3" lengthAdjust="spacingAndGlyphs" fill="#000">1180</text><rect x="1161.4" y="661.4" width="34" height="13.8" fill="#ffff00" stroke="#2f7a1e" stroke-width="1.2"/><text x="1165.2" y="673.0" font-size="12" textLength="26.3" lengthAdjust="spacingAndGlyphs" fill="#000">1209</text><rect x="1219.3" y="663.3" width="34" height="13.8" fill="#ffff00" stroke="#2f7a1e" stroke-width="1.2"/><text x="1223.1" y="674.9" font-size="12" textLength="26.3" lengthAdjust="spacingAndGlyphs" fill="#000">1253</text><rect x="1268.4" y="664.1" width="34" height="13.8" fill="#ffff00" stroke="#2f7a1e" stroke-width="1.2"/><text x="1272.2" y="675.7" font-size="12" textLength="26.3" lengthAdjust="spacingAndGlyphs" fill="#000">1290</text><rect x="129.7" y="386.2" width="25.6" height="14.4" fill="#ffff00" stroke="#b8460e" stroke-width="1.3"/><text x="132.6" y="397.8" font-size="12" textLength="19.7" lengthAdjust="spacingAndGlyphs" fill="#000">436</text><rect x="276.9" y="386.2" width="25.6" height="14.4" fill="#ffff00" stroke="#b8460e" stroke-width="1.3"/><text x="279.8" y="397.8" font-size="12" textLength="19.7" lengthAdjust="spacingAndGlyphs" fill="#000">546</text></svg>
<div class="r" style="left:1355.5px;top:386px;width:9px;height:320px;border-top:2px solid #8e8e8e;border-left:2px solid #8e8e8e;box-sizing:content-box;background:linear-gradient(90deg,#ffb45a,#ff8a10 45%,#f06000);"></div>
<div class="r" style="left:8px;top:709px;width:1347.5px;height:27px;background:#fdfbe6;"></div>
<div class="t" style="left:17.80px;top:718.70px;font-size:12px;line-height:12px;color:#000;transform:scaleX(1.0236);">Max: 612 nm</div>
<div class="r" style="left:921.6px;top:715.9px;width:71.60000000000002px;height:15.5px;border-radius:4px;background:linear-gradient(#f6f4dc,#e6e2cc 40%,#b8b0a0 85%,#9c9484);"></div>
<div class="t" style="left:932.60px;top:717.02px;font-size:11.5px;line-height:11.5px;color:#000;transform:scaleX(0.9310);">Reference</div>
<div class="r" style="left:999.8px;top:716px;width:44.200000000000045px;height:15.700000000000045px;border-radius:4px;background:linear-gradient(#f6f4dc,#e6e2cc 40%,#b8b0a0 85%,#9c9484);"></div>
<div class="t" style="left:1010.60px;top:717.02px;font-size:11.5px;line-height:11.5px;color:#000;transform:scaleX(0.9823);">Dips</div>
<div class="r" style="left:1050.6px;top:716.5px;width:48.200000000000045px;height:14.299999999999955px;border-radius:4px;border:1.5px solid #f3a630;background:radial-gradient(ellipse 60% 70% at 40% 45%,#fffcb8,#fff060 45%,#ffd838 85%,#ffc030);"></div>
<div class="t" style="left:1061.00px;top:717.02px;font-size:11.5px;line-height:11.5px;color:#6c6c52;font-weight:bold;transform:scaleX(0.8721);">Peaks</div>
<div class="r" style="left:1105.7px;top:716.5px;width:54.0px;height:14.299999999999955px;border-radius:4px;border:1.5px solid #f3a630;background:radial-gradient(ellipse 60% 70% at 40% 45%,#fffcb8,#fff060 45%,#ffd838 85%,#ffc030);"></div>
<div class="t" style="left:1117.00px;top:717.02px;font-size:11.5px;line-height:11.5px;color:#6c6c52;font-weight:bold;transform:scaleX(0.9061);">Colors</div>
<div class="t" style="left:1192.90px;top:718.35px;font-size:11px;line-height:11px;color:#000;transform:scaleX(0.9368);">Filter</div>
<div class="r" style="left:1222.4px;top:714.5px;width:33.59999999999991px;height:15.399999999999977px;background:#fffaee;"></div>
<div class="t" style="left:1233.40px;top:716.70px;font-size:12px;line-height:12px;color:#000;transform:scaleX(0.9814);">30</div>
<div class="r" style="left:1275.8px;top:716.7px;width:74.10000000000014px;height:14.299999999999955px;border-radius:4px;border:1.5px solid #f3a630;background:radial-gradient(ellipse 60% 70% at 40% 45%,#fffcb8,#fff060 45%,#ffd838 85%,#ffc030);"></div>
<div class="t" style="left:1288.20px;top:717.02px;font-size:11.5px;line-height:11.5px;color:#6c6c52;font-weight:bold;transform:scaleX(0.8959);">Trim scale</div>
</body></html>
